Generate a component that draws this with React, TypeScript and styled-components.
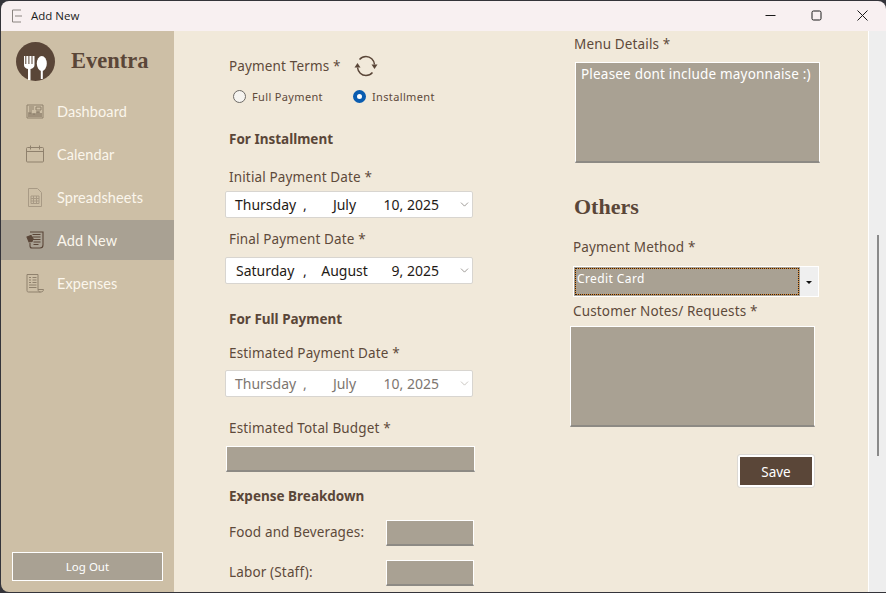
import React from 'react';
import styled, { createGlobalStyle } from 'styled-components';
import { ChevronDown } from 'lucide-react';

const GlobalStyle = createGlobalStyle`
  html, body {
    margin: 0;
    padding: 0;
    background: #3a3a3c;
    overflow: hidden;
  }
  * {
    box-sizing: border-box;
  }
`;

const Desktop = styled.div`
  width: 886px;
  height: 593px;
  padding: 1px 0 1px 1px;
  background: #34343a;
`;

const Window = styled.div`
  width: 885px;
  height: 591px;
  display: flex;
  flex-direction: column;
  border-radius: 8px 8px 0 8px;
  overflow: hidden;
  font-family: 'Noto Sans', sans-serif;
`;

const TitleBar = styled.div`
  height: 30px;
  flex: none;
  display: flex;
  align-items: center;
  padding-left: 9px;
  padding-bottom: 1px;
  background: #f8f0f1;
  color: #1c1c1c;
  font-size: 11.5px;
`;

const TitleText = styled.span`
  margin-left: 9px;
  font-family: 'Open Sans', sans-serif;
`;

const WindowButtons = styled.div`
  margin-left: auto;
  margin-right: 1px;
  display: flex;
`;

const WindowButton = styled.div`
  width: 46px;
  height: 30px;
  padding-bottom: 1px;
  display: flex;
  align-items: center;
  justify-content: center;
`;

const Body = styled.div`
  flex: 1;
  display: flex;
  min-height: 0;
`;

const Sidebar = styled.aside`
  width: 173px;
  flex: none;
  display: flex;
  flex-direction: column;
  background: #cdbfa6;
`;

const Brand = styled.div`
  display: flex;
  align-items: center;
  gap: 16px;
  height: 60px;
  padding-left: 15px;
`;

const BrandName = styled.span`
  font-family: 'Liberation Serif', serif;
  font-weight: 700;
  font-size: 22.5px;
  color: #5a4638;
`;

const Nav = styled.nav`
  display: flex;
  flex-direction: column;
  gap: 3px;
`;

const NavItem = styled.div<{ $active?: boolean }>`
  height: 40px;
  display: flex;
  align-items: center;
  gap: 13px;
  padding-left: 25px;
  background: ${({ $active }) => ($active ? '#a9a193' : 'transparent')};
  color: #fbf6ec;
  font-family: 'Lato', sans-serif;
  font-size: 14.5px;
  letter-spacing: 0.1px;
`;

const LogOut = styled.button`
  margin: auto 0 11px 11px;
  width: 151px;
  height: 29px;
  border: 1px solid #fff;
  background: #a9a193;
  color: #fff;
  font-family: 'Noto Sans', sans-serif;
  font-size: 11.5px;
`;

const Content = styled.main`
  flex: 1;
  display: grid;
  grid-template-columns: 395px 299px;
  background: #f1e9da;
  overflow: hidden;
`;

const Column = styled.div<{ $left: number; $top: number }>`
  display: flex;
  flex-direction: column;
  align-items: flex-start;
  padding-left: ${({ $left }) => $left}px;
  padding-top: ${({ $top }) => $top}px;
`;

const Label = styled.div<{ $top?: number; $left?: number }>`
  margin-top: ${({ $top }) => $top ?? 0}px;
  margin-left: ${({ $left }) => $left ?? 0}px;
  height: 20px;
  line-height: 20px;
  font-size: 13.5px;
  letter-spacing: 0.15px;
  color: #5e4a3a;
  white-space: nowrap;
`;

const Heading = styled.div<{ $top: number }>`
  margin-top: ${({ $top }) => $top}px;
  margin-left: 4px;
  height: 20px;
  line-height: 20px;
  font-size: 13.5px;
  font-weight: 700;
  color: #5a4638;
`;

const TermsRow = styled.div`
  display: flex;
  align-items: center;
  margin-left: 4px;
  gap: 13px;
  height: 28px;
`;

const RadioRow = styled.div`
  display: flex;
  margin: 5px 0 0 8px;
  height: 22px;
`;

const RadioOption = styled.label<{ $width?: number }>`
  display: flex;
  align-items: center;
  gap: 6px;
  width: ${({ $width }) => ($width ? `${$width}px` : 'auto')};
  font-size: 11px;
  letter-spacing: 0.35px;
  color: #5e4a3a;
`;

const RadioDot = styled.span<{ $checked?: boolean }>`
  width: 13px;
  height: 13px;
  border-radius: 50%;
  background: ${({ $checked }) => ($checked ? '#fff' : '#f6f4f0')};
  border: ${({ $checked }) => ($checked ? '4px solid #0a5cb0' : '1px solid #6d6a66')};
`;

const DateBox = styled.div<{ $disabled?: boolean; $top: number }>`
  margin-top: ${({ $top }) => $top}px;
  width: 248px;
  height: 27px;
  display: flex;
  align-items: center;
  background: #fff;
  border: 1px solid #d8d5d0;
  border-radius: 2px;
  font-size: 14px;
  color: ${({ $disabled }) => ($disabled ? '#7d7670' : '#1f1a16')};
`;

const DatePart = styled.span<{ $width: number; $align?: string }>`
  width: ${({ $width }) => $width}px;
  text-align: ${({ $align }) => $align ?? 'left'};
  white-space: nowrap;
`;

const DateChevron = styled(ChevronDown)`
  margin-left: auto;
  margin-right: 1px;
`;

const GrayField = styled.div<{ $width: number; $height: number; $top?: number; $left?: number }>`
  margin-top: ${({ $top }) => $top ?? 0}px;
  margin-left: ${({ $left }) => $left ?? 0}px;
  width: ${({ $width }) => $width}px;
  height: ${({ $height }) => $height}px;
  flex: none;
  padding: 2px 5px;
  background: #a9a193;
  border: 1px solid #fff;
  border-bottom: 2px solid #8d8a84;
  color: #fff;
  font-size: 13.5px;
  letter-spacing: 0.2px;
`;

const BreakdownRow = styled.div<{ $top: number }>`
  margin-top: ${({ $top }) => $top}px;
  display: flex;
  align-items: flex-start;
  justify-content: space-between;
  width: 249px;
  padding-left: 4px;
`;

const SectionTitle = styled.div`
  margin: 31px 0 0 4px;
  height: 26px;
  line-height: 26px;
  font-family: 'Liberation Serif', serif;
  font-weight: 700;
  font-size: 22px;
  color: #5a4638;
`;

const Combo = styled.div`
  margin: 9px 0 0 3px;
  width: 246px;
  height: 31px;
  flex: none;
  display: flex;
  background: #fff;
  padding: 1px;
`;

const ComboValue = styled.div`
  width: 226px;
  padding: 1px;
  background: #a9a193;
`;

const ComboText = styled.div`
  height: 100%;
  padding-left: 1px;
  line-height: 20px;
  border: 1px dotted #2a2018;
  background: linear-gradient(#a9a193, #a9a193) padding-box, #e08a30 border-box;
  color: #fff;
  font-size: 12px;
  letter-spacing: 0.4px;
`;

const ComboArrow = styled.div`
  flex: 1;
  display: flex;
  align-items: center;
  justify-content: center;
  background: #efefef;
  &::after {
    content: '';
    border-left: 3px solid transparent;
    border-right: 3px solid transparent;
    border-top: 3px solid #111;
    margin-top: 2px;
  }
`;

const SaveButton = styled.button`
  margin: 28px 0 0 168px;
  width: 76px;
  height: 32px;
  padding-top: 2px;
  background: #5a4638;
  border: 2px solid #fff;
  outline: 1px solid #dcd9d4;
  outline-offset: 0;
  border-radius: 2px;
  color: #fff;
  font-family: 'Noto Sans', sans-serif;
  font-size: 13.5px;
`;

const ScrollTrack = styled.div`
  width: 18px;
  flex: none;
  padding: 204px 0 0 8px;
  background: #eeeeee;
  border-left: 1px solid #fff;
`;

const ScrollThumb = styled.div`
  width: 2px;
  height: 221px;
  background: #8a8a8a;
`;

const strokeProps = { fill: 'none', stroke: '#8f816d', strokeWidth: 1 };

const AppGlyph = () => (
  <svg width="12" height="14" viewBox="0 0 12 14">
    <path d="M2.5 1H11M2.5 1V13H11M5 7H12" fill="none" stroke="#8a8480" strokeWidth="1" />
  </svg>
);

const LogoMark = () => (
  <svg width="39" height="39" viewBox="0 0 39 39">
    <circle cx="19.5" cy="19.5" r="19.5" fill="#5a4638" />
    <path
      d="M8 14v9c0 2 1.500 3.500 4 4V38h2.500V27c2.500-.5 4-2 4-4v-9h-2v8h-1v-8h-2.100v8h-1v-8h-2.100v8h-1v-8z"
      fill="#fff"
    />
    <ellipse cx="25.800" cy="21.500" rx="5" ry="7.500" fill="#fff" />
    <rect x="24.800" y="28" width="2" height="9" fill="#fff" />
  </svg>
);

const DashboardIcon = () => (
  <svg width="18" height="15" viewBox="0 0 18 15" {...strokeProps}>
    <path d="M1 1h16v13H1z" />
    <path d="M3 3h5M3 5h5M3 7h3M10 3h5v3h-5z" />
    <path d="M3 13V9h2v4M7 13v-3h2v3M11 13V8h2v5M15 13V9" strokeWidth="1.500" />
  </svg>
);

const CalendarIcon = () => (
  <svg width="18" height="18" viewBox="0 0 18 18" {...strokeProps}>
    <rect x="0.500" y="2.500" width="17" height="14.500" rx="1" />
    <path d="M0.500 6.500h17M4.500 0.500v4M13.500 0.500v4" />
  </svg>
);

const SheetIcon = () => (
  <svg width="18" height="19" viewBox="0 0 18 19" fill="none" stroke="#a89a85" strokeWidth="1">
    <path d="M2.500.5h9l4 4v14h-13z" />
    <path d="M5 8h8v7.500H5zM5 10.500h8M5 13h8M7.500 8v7.500M10.500 8v7.500" />
  </svg>
);

const AddNewIcon = () => (
  <svg width="18" height="18" viewBox="0 0 18 18" fill="none" stroke="#5a4638" strokeWidth="1.100">
    <path d="M4 1h13v13c0 2-1 3-3 3H6c-1.500 0-2-1-2-2v-3" />
    <path d="M6.500 3.500h8M6.500 6h8M6.500 8.500h8M7.500 11h7M7.500 13.500h5" />
    <path d="M1 6l4-1.500 2 3-1 3-3 .5z" fill="#5a4638" />
  </svg>
);

const ExpensesIcon = () => (
  <svg width="18" height="19" viewBox="0 0 18 19" {...strokeProps}>
    <path d="M1 .5h11v15c0 1.500 1 2.500 2.500 2.500H2.500C1.500 18 1 17.500 1 16.500z" />
    <path d="M12 15.500h5.500c0 1.500-1 2.500-3 2.500" />
    <path d="M3 3.500h2M3 6h2M3 8.500h2M6.500 3.500h4M6.500 6h4M6.500 8.500h4M3 11h7.500M3 13.500h7.500" />
  </svg>
);

const RefreshIcon = () => (
  <svg width="24" height="22" viewBox="0 0 24 22" fill="none" stroke="#5a4638" strokeWidth="1.500">
    <path d="M5.500 4.500C7 2.800 9.300 1.500 12 1.500c4.500 0 8 3.500 8.500 8" />
    <path d="M18.500 17.500c-1.500 1.700-3.800 3-6.500 3-4.500 0-8-3.500-8.500-8" />
    <path d="M0.500 12.500h6L3.500 8z" fill="#5a4638" stroke="none" />
    <path d="M17.500 9.500h6l-3 4.500z" fill="#5a4638" stroke="none" />
  </svg>
);

function DateField({
  day,
  month,
  date,
  top,
  disabled,
  inset = 9,
}: {
  day: string;
  month: string;
  date: string;
  top: number;
  disabled?: boolean;
  inset?: number;
}) {
  return (
    <DateBox $top={top} $disabled={disabled}>
      <DatePart $width={inset} />
      <DatePart $width={68 - (inset - 9)}>{day}</DatePart>
      <DatePart $width={13}>,</DatePart>
      <DatePart $width={57} $align="center">
        {month}
      </DatePart>
      <DatePart $width={66} $align="right">
        {date}
      </DatePart>
      <DateChevron size={13} color={disabled ? '#b5b0aa' : '#77726c'} strokeWidth={1.300} />
    </DateBox>
  );
}

const navItems = [
  { label: 'Dashboard', icon: <DashboardIcon /> },
  { label: 'Calendar', icon: <CalendarIcon /> },
  { label: 'Spreadsheets', icon: <SheetIcon /> },
  { label: 'Add New', icon: <AddNewIcon />, active: true },
  { label: 'Expenses', icon: <ExpensesIcon /> },
];

export default function App() {
  return (
    <Desktop>
      <GlobalStyle />
      <Window>
        <TitleBar>
          <AppGlyph />
          <TitleText>Add New</TitleText>
          <WindowButtons>
            <WindowButton>
              <svg width="11" height="11" viewBox="0 0 11 11" stroke="#1a1a1a" fill="none">
                <path d="M0.500 5.500h10" />
              </svg>
            </WindowButton>
            <WindowButton>
              <svg width="11" height="11" viewBox="0 0 11 11" stroke="#1a1a1a" fill="none">
                <rect x="1" y="1" width="9" height="9" rx="1.500" />
              </svg>
            </WindowButton>
            <WindowButton>
              <svg width="11" height="11" viewBox="0 0 11 11" stroke="#1a1a1a" fill="none">
                <path d="M.5.500l10 10M10.500.500l-10 10" />
              </svg>
            </WindowButton>
          </WindowButtons>
        </TitleBar>
        <Body>
          <Sidebar>
            <Brand>
              <LogoMark />
              <BrandName>Eventra</BrandName>
            </Brand>
            <Nav>
              {navItems.map((item) => (
                <NavItem key={item.label} $active={item.active}>
                  {item.icon}
                  {item.label}
                </NavItem>
              ))}
            </Nav>
            <LogOut>Log Out</LogOut>
          </Sidebar>
          <Content>
            <Column $left={51} $top={21}>
              <TermsRow>
                <Label>Payment Terms *</Label>
                <RefreshIcon />
              </TermsRow>
              <RadioRow>
                <RadioOption $width={120}>
                  <RadioDot />
                  Full Payment
                </RadioOption>
                <RadioOption>
                  <RadioDot $checked />
                  Installment
                </RadioOption>
              </RadioRow>
              <Heading $top={22}>For Installment</Heading>
              <Label $top={18} $left={4}>
                Initial Payment Date *
              </Label>
              <DateField day="Thursday" month="July" date="10, 2025" top={4} />
              <Label $top={11} $left={4}>
                Final Payment Date *
              </Label>
              <DateField day="Saturday" month="August" date="9, 2025" top={8} inset={10} />
              <Heading $top={25}>For Full Payment</Heading>
              <Label $top={14} $left={4}>
                Estimated Payment Date *
              </Label>
              <DateField day="Thursday" month="July" date="10, 2025" top={7} disabled />
              <Label $top={21} $left={4}>
                Estimated Total Budget *
              </Label>
              <GrayField $width={249} $height={26} $top={8} $left={1} />
              <Heading $top={14}>Expense Breakdown</Heading>
              <BreakdownRow $top={14}>
                <Label $top={2}>Food and Beverages:</Label>
                <GrayField $width={88} $height={26} />
              </BreakdownRow>
              <BreakdownRow $top={14}>
                <Label $top={2}>Labor (Staff):</Label>
                <GrayField $width={88} $height={26} />
              </BreakdownRow>
            </Column>
            <Column $left={1} $top={3}>
              <Label $left={4}>Menu Details *</Label>
              <GrayField $width={245} $height={101} $top={8} $left={5}>
                Pleasee dont include mayonnaise :)
              </GrayField>
              <SectionTitle>Others</SectionTitle>
              <Label $top={17} $left={3}>
                Payment Method *
              </Label>
              <Combo>
                <ComboValue>
                  <ComboText>Credit Card</ComboText>
                </ComboValue>
                <ComboArrow />
              </Combo>
              <Label $top={4} $left={3}>
                Customer Notes/ Requests *
              </Label>
              <GrayField $width={245} $height={101} $top={5} />
              <SaveButton>Save</SaveButton>
            </Column>
          </Content>
          <ScrollTrack>
            <ScrollThumb />
          </ScrollTrack>
        </Body>
      </Window>
    </Desktop>
  );
}
